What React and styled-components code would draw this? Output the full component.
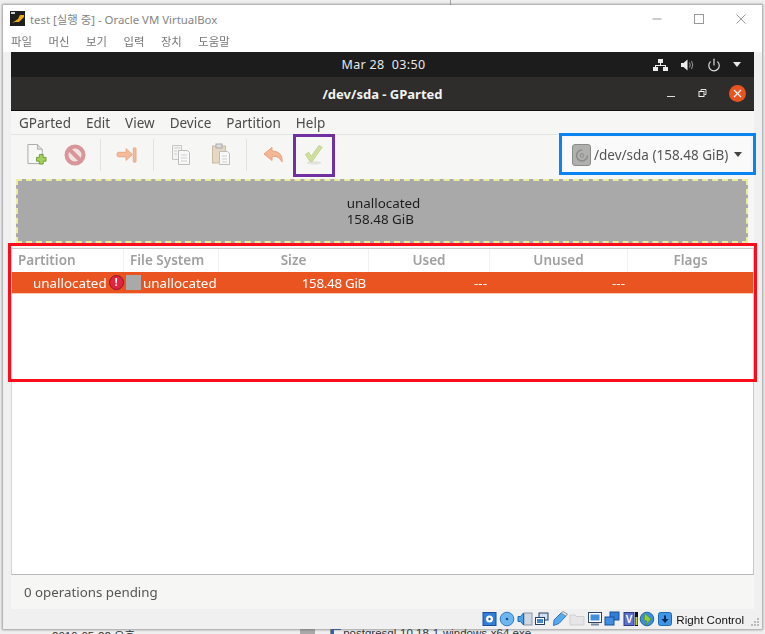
import React from "react";
import styled, { createGlobalStyle } from "styled-components";
import { LuPower } from "react-icons/lu";

const Global = createGlobalStyle`
  html, body { margin: 0; padding: 0; background: #fff; }
  #root { width: 765px; height: 634px; }
`;

const UI = `"Noto Sans", "Open Sans", sans-serif`;

const Page = styled.div`
  position: relative;
  width: 765px;
  height: 634px;
  overflow: hidden;
  background: #efefef;
  padding: 5px 3px 5px 3px;
  box-sizing: border-box;
`;

const TopTick = styled.div`
  position: absolute;
  left: 450px;
  top: 0;
  width: 1px;
  height: 5px;
  background: #a8a8a8;
`;

const Behind = styled.div`
  position: absolute;
  left: 52px;
  top: 627px;
  display: flex;
  align-items: flex-start;
  font: 11.5px "Liberation Sans", "Noto Sans CJK KR", sans-serif;
  color: #333;
  white-space: nowrap;
`;

const BehindBlock = styled.span`
  width: 15px;
  height: 7px;
  margin: 0 7px 0 165px;
  background: #a9a9a9;
`;

const BehindBox = styled.span`
  width: 10px;
  height: 7px;
  margin: 0 2px 0 8px;
  border-left: 1px solid #888;
  box-shadow: inset 3px 3px 0 #2a62b8;
`;

const Win = styled.div`
  position: relative;
  z-index: 1;
  height: 100%;
  background: #f0f0f0;
  box-shadow: 0 0 2px 1px rgba(90, 90, 90, 0.55);
  display: flex;
  flex-direction: column;
  filter: blur(0.3px);
`;

const Chrome = styled.div`
  background: #fff;
  height: 47px;
  flex: none;
  display: flex;
  flex-direction: column;
`;

const TitleRow = styled.div`
  height: 27px;
  display: flex;
  align-items: center;
  padding: 0 7px;
  font: 11.4px "Noto Sans", "Noto Sans CJK KR", sans-serif;
  color: #858585;
  gap: 5px;
`;

const TitleText = styled.span`
  flex: 1;
`;

const WinButtons = styled.div`
  display: flex;
  gap: 30px;
  margin-right: 8px;
  align-items: center;
`;

const KMenu = styled.div`
  display: flex;
  gap: 16.500px;
  padding-left: 8px;
  font: 11.400px "Noto Sans CJK KR", sans-serif;
  color: #777;
  line-height: 18px;
`;

const Guest = styled.div`
  flex: 1;
  margin: 0 8px 0 8px;
  background: #fff;
  display: flex;
  flex-direction: column;
  font-family: ${UI};
  min-height: 0;
`;

const TopBar = styled.div`
  height: 25px;
  flex: none;
  background: #1c1c1c;
  color: #e8e8e8;
  display: flex;
  align-items: center;
  justify-content: center;
  font-size: 12.5px;
  letter-spacing: 0.35px;
  padding-left: 2px;
  position: relative;
`;

const Tray = styled.div`
  position: absolute;
  right: 13px;
  top: 0;
  bottom: 0;
  display: flex;
  align-items: center;
  gap: 12px;
  color: #e8e8e8;
`;

const HeaderBar = styled.div`
  height: 33px;
  flex: none;
  background: #2e2d2b;
  border-bottom: 1px solid #111;
  color: #f2f2f2;
  font-weight: 700;
  font-size: 13px;
  display: flex;
  align-items: center;
  justify-content: center;
  position: relative;
`;

const HeaderButtons = styled.div`
  position: absolute;
  right: 8px;
  top: 0;
  bottom: 0;
  display: flex;
  align-items: center;
  gap: 22px;
`;

const CloseDot = styled.div`
  width: 17px;
  height: 17px;
  border-radius: 50%;
  background: #e95420;
  display: flex;
  align-items: center;
  justify-content: center;
`;

const MenuBar = styled.div`
  height: 23px;
  flex: none;
  background: #f6f6f5;
  border-bottom: 1px solid #e3e3e1;
  display: flex;
  align-items: center;
  gap: 15px;
  padding-left: 8px;
  font-size: 13.5px;
  color: #4b4b4b;
`;

const Toolbar = styled.div`
  height: 42px;
  flex: none;
  background: #f6f6f5;
  display: flex;
  align-items: center;
  padding: 0 0 3px 6px;
  box-sizing: border-box;
`;

const Tool = styled.div`
  width: ${p => p.$w}px;
  height: 28px;
  display: flex;
  align-items: center;
  justify-content: center;
  flex: none;
`;

const Sep = styled.div`
  width: 1px;
  height: 32px;
  margin: 0 6px;
  background: #e2e2e0;
  flex: none;
`;

const DeviceBox = styled.div`
  margin-left: auto;
  margin-right: 4px;
  width: 186px;
  height: 36px;
  background: #fafafa;
  display: flex;
  align-items: center;
  padding-left: 8px;
  box-sizing: border-box;
  gap: 3px;
  font-size: 13.5px;
  color: #555;
`;

const Caret = styled.span`
  width: 0;
  height: 0;
  border-left: 4.5px solid transparent;
  border-right: 4.5px solid transparent;
  border-top: 5px solid ${p => p.$c || "#444"};
  margin-left: ${p => p.$m || 0}px;
`;

const Content = styled.div`
  flex: 1;
  background: #fff;
  display: flex;
  flex-direction: column;
  min-height: 0;
`;

const GraphWrap = styled.div`
  background: #f6f6f5;
  height: 71px;
  flex: none;
  padding: 2px 6px 0 5px;
  box-sizing: border-box;
`;

const Graph = styled.div`
  height: 64px;
  background: #a9a9a9;
  border: 2px dashed #ecec9e;
  box-sizing: border-box;
  display: flex;
  flex-direction: column;
  justify-content: center;
  align-items: center;
  font-size: 13.4px;
  line-height: 16px;
  color: #1d1d1d;
`;

const GraphLabel = styled.div`
  text-align: left;
  margin-left: 3px;
`;

const Tree = styled.div`
  flex: 1;
  min-height: 0;
  border: 1px solid #c9c9c7;
  border-bottom-color: #b8b8b6;
  border-left-color: #d6d6d4;
  background: #fff;
`;

const Cols = `grid-template-columns: 112px 95px 150px 121px 138px 1fr;`;

const HeadRow = styled.div`
  display: grid;
  ${Cols}
  height: 23px;
  background: #fff;
  font-size: 13.5px;
  font-weight: 600;
  color: #a0a0a0;
`;

const HeadCell = styled.div`
  display: flex;
  align-items: center;
  padding-bottom: 2px;
  box-sizing: border-box;
  justify-content: ${p => (p.$left ? "flex-start" : "center")};
  padding-left: ${p => (p.$left ? "6px" : "0")};
  border-right: 1px solid #f1f1f0;
  &:last-child { border-right: 0; }
`;

const DataRow = styled.div`
  display: grid;
  ${Cols}
  height: 21px;
  background: #e95420;
  color: #fff;
  font-size: 13.4px;
  border-bottom: 1px solid #f6c7b4;
  box-sizing: content-box;
`;

const Cell = styled.div`
  display: flex;
  align-items: center;
  justify-content: ${p => (p.$end ? "flex-end" : "flex-start")};
  padding-left: ${p => p.$pl || 0}px;
  padding-right: ${p => p.$pr || 0}px;
  letter-spacing: ${p => p.$ls || 0}px;
  white-space: nowrap;
`;

const Swatch = styled.span`
  width: 15px;
  height: 15px;
  background: #a9a9a9;
  margin-right: 2px;
  flex: none;
`;

const ErrorDot = styled.span`
  width: 15px;
  height: 15px;
  border-radius: 50%;
  background: #e3243e;
  border: 1px solid #8f1626;
  box-sizing: border-box;
  margin-left: 2px;
  color: #fff;
  font-size: 10.500px;
  font-weight: 700;
  line-height: 13px;
  text-align: center;
  flex: none;
`;

const Pending = styled.div`
  height: 34px;
  flex: none;
  background: #f6f6f5;
  display: flex;
  align-items: center;
  padding-left: 13px;
  font-size: 13.3px;
  color: #555;
`;

const StatusBar = styled.div`
  height: 20px;
  flex: none;
  display: flex;
  align-items: center;
  justify-content: flex-end;
  padding-right: 18px;
  gap: 1.500px;
  font: 11.600px "Liberation Sans", sans-serif;
  color: #111;
  position: relative;
`;

const Hint = styled.span`
  margin-left: 2px;
`;

const Grip = styled.svg`
  position: absolute;
  right: 2px;
  bottom: 2px;
`;

const Mark = styled.div`
  position: absolute;
  z-index: 2;
  left: ${p => p.$x}px;
  top: ${p => p.$y}px;
  width: ${p => p.$w}px;
  height: ${p => p.$h}px;
  border: 3px solid ${p => p.$c};
  box-sizing: border-box;
  pointer-events: none;
`;

const Faded = styled.svg`
  display: block;
`;

const NewIcon = () => (
  <Faded width="21" height="23" viewBox="0 0 22 24">
    <path d="M2 1.500h10l5 5v15H2z" fill="#f7f7f5" stroke="#a8a8a8" />
    <path d="M12 1.500v5h5" fill="#dcdcdc" stroke="#b0b0b0" />
    <path d="M14 12h4v3h3v4h-3v3h-4v-3h-3v-4h3z" fill="#a3cf5d" stroke="#739a38" />
  </Faded>
);
const StopIcon = () => (
  <Faded width="22" height="22" viewBox="0 0 22 22">
    <circle cx="11" cy="11" r="8.500" fill="#f2e3e3" stroke="#d89698" strokeWidth="4" />
    <path d="M5.500 5.500 16.500 16.500" stroke="#d89698" strokeWidth="4" />
  </Faded>
);
const ArrowIcon = () => (
  <Faded width="22" height="18" viewBox="0 0 24 20">
    <path d="M1 8.500q0-1.500 2-1.500h8V3l7 6.500-7 6.500v-4H3q-2 0-2-1.500z" fill="#f4bc9e" stroke="#eaa27e" />
    <rect x="19" y="2" width="3" height="16" rx="1" fill="#f4bc9e" stroke="#eaa27e" />
  </Faded>
);
const CopyIcon = () => (
  <Faded width="20" height="22" viewBox="0 0 20 22">
    <path d="M1.500 1.500h9v14h-9z" fill="#f3f3f3" stroke="#c6c6c6" />
    <path d="M7.500 6.500h9l2 2v12h-11z" fill="#f8f8f8" stroke="#bdbdbd" />
    <path d="M3 4h6M3 7h3M3 10h3M10 11h6M10 14h6M10 17h6" stroke="#cfcfcf" />
  </Faded>
);
const PasteIcon = () => (
  <Faded width="20" height="23" viewBox="0 0 20 23">
    <rect x="1.500" y="3" width="13" height="17" fill="#e4d7c4" stroke="#c8b9a3" />
    <rect x="5" y="1" width="6" height="4" fill="#dcdcdc" stroke="#aaa" />
    <path d="M8.500 8.500h8l2 2v11h-10z" fill="#f8f8f8" stroke="#bdbdbd" />
    <path d="M11 13h5M11 16h5M11 19h5" stroke="#cfcfcf" />
  </Faded>
);
const UndoIcon = () => (
  <Faded width="23" height="18" viewBox="0 0 22 18">
    <path d="M9.500 1.500 1.500 8l8 6.500V10.500c4-.5 7.500.5 10 5.500 1-7-3.500-11-10-11z" fill="#f4b795" stroke="#eda17a" />
  </Faded>
);
const CheckIcon = () => (
  <Faded width="20" height="22" viewBox="0 0 22 24">
    <ellipse cx="11" cy="20.500" rx="8" ry="2" fill="#e2e2de" />
    <path d="M1.500 11.500 5 9l3 4.500L16.500 1.500 20 3.500 9 19H6.500z" fill="#cfdf9f" stroke="#bfd188" />
  </Faded>
);
const DiskIcon = () => (
  <Faded width="19" height="22" viewBox="0 0 19 22">
    <rect x=".5" y=".5" width="18" height="21" rx="2.500" fill="#b0b0ae" stroke="#8b8b89" />
    <path d="M15.500 11.500a5.500 5.500 0 1 1-5.500-5.500" fill="none" stroke="#8c8c8a" strokeWidth="1.500" />
    <circle cx="10" cy="11.500" r="1.800" fill="none" stroke="#8c8c8a" />
  </Faded>
);
const Network = () => (
  <svg width="15" height="14" viewBox="0 0 15 14" fill="#ececec">
    <rect x="5" y="1" width="5" height="4" />
    <rect x="0" y="9" width="5" height="4" />
    <rect x="10" y="9" width="5" height="4" />
    <path d="M7 5h1v2h5v2h-1V8H3v1H2V7h5z" />
  </svg>
);
const Speaker = () => (
  <svg width="15" height="14" viewBox="0 0 15 14" fill="none">
    <path d="M1 5h2.500L7.500 1.500v11L3.500 9H1z" fill="#ececec" />
    <path d="M9.500 4.500q1.500 2.500 0 5M11.500 3q2.500 4 0 8" stroke="#9a9a9a" />
  </svg>
);

const Tile = ({ children }) => (
  <svg width="16" height="16" viewBox="0 0 16 16">{children}</svg>
);
const statusIcons = [
  <Tile key="a"><rect x="1" y="1.500" width="13" height="13" fill="#2f7fd8" stroke="#1a4f99" /><circle cx="7.500" cy="8" r="3.500" fill="#fff" /><circle cx="7.500" cy="8" r="1.200" fill="#1a4f99" /></Tile>,
  <Tile key="b"><circle cx="8" cy="8" r="6.800" fill="#6bb7ee" stroke="#2b78c0" /><circle cx="8" cy="8" r="1.300" fill="#1a4f99" /></Tile>,
  <Tile key="c"><rect x="7" y="2" width="8" height="12" fill="#cfd8e2" stroke="#8a97a6" /><path d="M1 5.500h2.500L6.500 2v12L3.500 10.500H1z" fill="#4aa3e8" stroke="#1e69b0" /></Tile>,
  <Tile key="d"><rect x="5" y="2" width="9" height="7" fill="#cfe0f4" stroke="#28405e" /><rect x="1.500" y="6.500" width="9" height="7" fill="#fff" stroke="#28405e" /><rect x="3" y="8" width="6" height="4" fill="#3f86d6" /></Tile>,
  <Tile key="e"><path d="M1.500 14.500 2 9l7-7 5 3-7 7.500z" fill="#58a8ee" stroke="#2b78c0" /><path d="M9 2l5 3 1.500-2L11 .5z" fill="#dce3ea" stroke="#8a97a6" /></Tile>,
  <Tile key="f"><path d="M1 4h5l1 1.500h8V14H1z" fill="#e6e6e6" stroke="#cfcfcf" /></Tile>,
  <Tile key="g"><rect x="1.500" y="1.500" width="13" height="10" fill="#fff" stroke="#30455f" /><rect x="3.500" y="3.500" width="9" height="6" fill="#3f8ee0" /><rect x="4" y="12.500" width="8" height="2" fill="#7c8aa0" /></Tile>,
  <Tile key="h"><rect x="6" y="1" width="9" height="8" fill="#2f7fd8" stroke="#1a4f99" /><rect x="1" y="6" width="9" height="8" fill="#3f8ee0" stroke="#1a4f99" /></Tile>,
  <Tile key="i"><rect x="2" y="1.500" width="10" height="13" fill="#5d6fd0" stroke="#2e3a80" /><text x="7" y="12" fontSize="10" fontFamily="Liberation Sans" fontWeight="700" textAnchor="middle" fill="#fff">V</text><rect x="13" y="1" width="3" height="14" fill="#111" /><rect x="13.500" y="6" width="2" height="8" fill="#c5d62e" /></Tile>,
  <Tile key="j"><circle cx="8" cy="8" r="6.800" fill="#3b8fdc" stroke="#22619f" /><path d="M6 2.500l6 5.500-5 6 1-4-3-1z" fill="#8ed03c" stroke="#4f8a1a" strokeWidth=".6" /></Tile>,
  <Tile key="k"><rect x="1.500" y="1.500" width="13" height="13" rx="2" fill="#3d97e6" stroke="#1e69b0" /><path d="M8 12 4.500 8H7V4.500h2V8h2.500z" fill="#0c2a55" /></Tile>,
];

export default function App() {
  return (
    <Page>
      <Global />
      <TopTick />
      <Behind>
        <span>2019-05-22 오후</span>
        <BehindBlock />
        <BehindBox />
        <span>postgresql-10.18-1-windows-x64.exe</span>
      </Behind>
      <Win>
        <Chrome>
          <TitleRow>
            <svg width="15" height="15" viewBox="0 0 15 15">
              <rect width="15" height="15" fill="#1f1f1f" />
              <path d="M2 12 8 8l2-4h4v2l-5 5H5z" fill="#f2a81d" />
              <rect x="1" y="1" width="4" height="2" fill="#cfcfcf" />
            </svg>
            <TitleText>test [실행 중] - Oracle VM VirtualBox</TitleText>
            <WinButtons>
              <svg width="12" height="12" viewBox="0 0 12 12"><path d="M1.500 6h9" stroke="#9a9a9a" /></svg>
              <svg width="12" height="12" viewBox="0 0 12 12"><rect x="1.500" y="1.500" width="9" height="9" fill="none" stroke="#9a9a9a" /></svg>
              <svg width="12" height="12" viewBox="0 0 12 12"><path d="M1.500 1.500l9 9M10.500 1.500l-9 9" stroke="#9a9a9a" /></svg>
            </WinButtons>
          </TitleRow>
          <KMenu>
            <span>파일</span><span>머신</span><span>보기</span><span>입력</span><span>장치</span><span>도움말</span>
          </KMenu>
        </Chrome>
        <Guest>
          <TopBar>
            Mar 28&nbsp;&nbsp;03:50
            <Tray>
              <Network />
              <Speaker />
              <LuPower size={14} color="#e0e0e0" />
              <Caret $c="#e8e8e8" />
            </Tray>
          </TopBar>
          <HeaderBar>
            /dev/sda - GParted
            <HeaderButtons>
              <svg width="9" height="9" viewBox="0 0 9 9"><path d="M0 7.500h8" stroke="#ddd" /></svg>
              <svg width="9" height="9" viewBox="0 0 9 9"><path d="M3 2V.5h5v5H6.500" fill="none" stroke="#ddd" /><rect x="1" y="2.500" width="5" height="5" fill="none" stroke="#eee" /></svg>
              <CloseDot>
                <svg width="9" height="9" viewBox="0 0 9 9"><path d="M1 1l7 7M8 1 1 8" stroke="#fff" strokeWidth="1.200" /></svg>
              </CloseDot>
            </HeaderButtons>
          </HeaderBar>
          <MenuBar>
            <span>GParted</span><span>Edit</span><span>View</span><span>Device</span><span>Partition</span><span>Help</span>
          </MenuBar>
          <Toolbar>
            <Tool $w={38}><NewIcon /></Tool>
            <Tool $w={39}><StopIcon /></Tool>
            <Sep />
            <Tool $w={40}><ArrowIcon /></Tool>
            <Sep />
            <Tool $w={41}><CopyIcon /></Tool>
            <Tool $w={39}><PasteIcon /></Tool>
            <Sep />
            <Tool $w={40}><UndoIcon /></Tool>
            <Tool $w={42}><CheckIcon /></Tool>
            <DeviceBox>
              <DiskIcon />
              /dev/sda (158.48 GiB)
              <Caret $m={3} />
            </DeviceBox>
          </Toolbar>
          <Content>
            <GraphWrap>
              <Graph>
                <GraphLabel>unallocated<br />158.48 GiB</GraphLabel>
              </Graph>
            </GraphWrap>
            <Tree>
              <HeadRow>
                <HeadCell $left>Partition</HeadCell>
                <HeadCell $left>File System</HeadCell>
                <HeadCell>Size</HeadCell>
                <HeadCell>Used</HeadCell>
                <HeadCell>Unused</HeadCell>
                <HeadCell>Flags</HeadCell>
              </HeadRow>
              <DataRow>
                <Cell $pl={21}>unallocated<ErrorDot>!</ErrorDot></Cell>
                <Cell $pl={2}><Swatch />unallocated</Cell>
                <Cell $end $pr={3} $ls={-0.3}>158.48 GiB</Cell>
                <Cell $end $pr={3}>---</Cell>
                <Cell $end $pr={3}>---</Cell>
                <Cell />
              </DataRow>
            </Tree>
            <Pending>0 operations pending</Pending>
          </Content>
        </Guest>
        <StatusBar>
          {statusIcons}
          <Hint>Right Control</Hint>
          <Grip width="10" height="10" viewBox="0 0 10 10" fill="#bbb">
            <rect x="7" y="1" width="2" height="2" /><rect x="4" y="4" width="2" height="2" /><rect x="7" y="4" width="2" height="2" />
            <rect x="1" y="7" width="2" height="2" /><rect x="4" y="7" width="2" height="2" /><rect x="7" y="7" width="2" height="2" />
          </Grip>
        </StatusBar>
      </Win>
      <Mark $x={293} $y={134} $w={42} $h={43} $c="#7030a0" />
      <Mark $x={559} $y={133} $w={197} $h={42} $c="#0a84f0" />
      <Mark $x={8} $y={243} $w={749} $h={139} $c="#fb0d1b" />
    </Page>
  );
}
